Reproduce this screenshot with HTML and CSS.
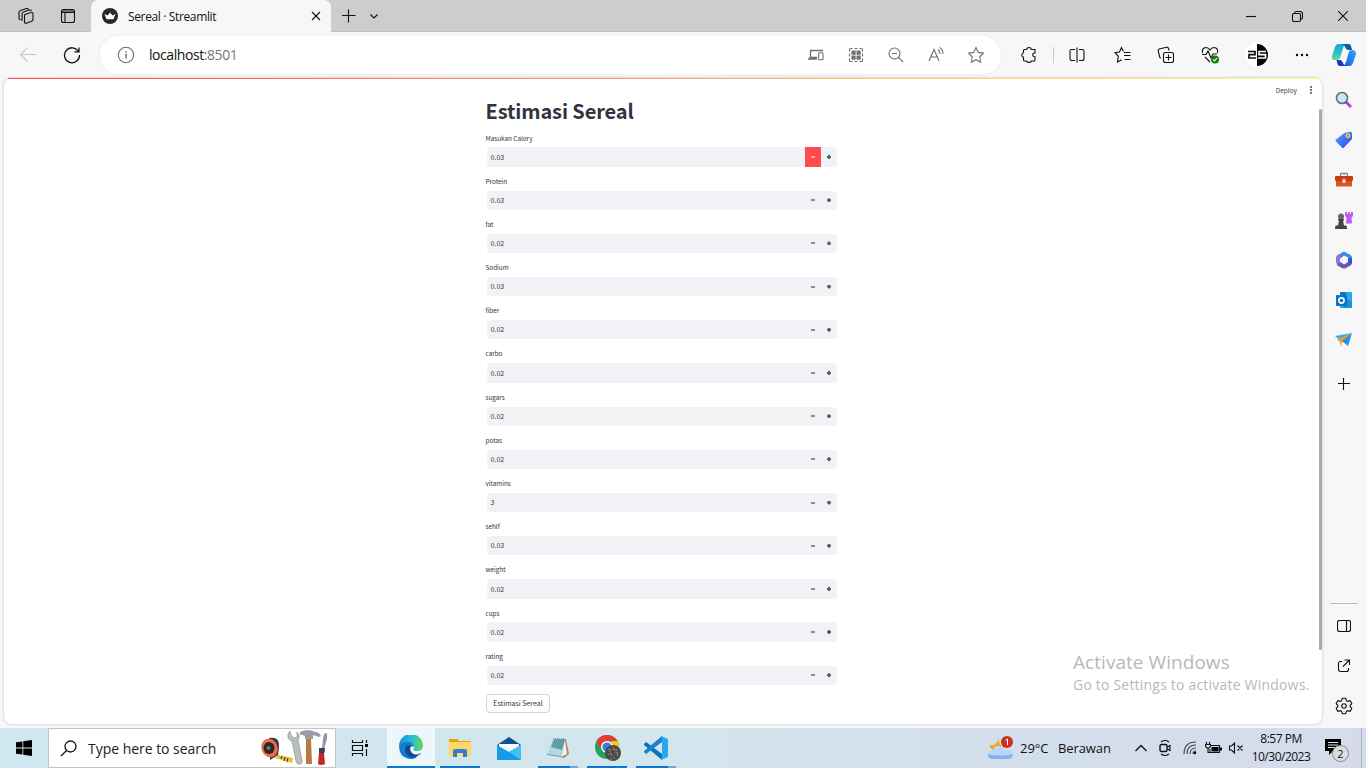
FILE: index.html
```html
<!DOCTYPE html>
<html lang="en">
<head>
<meta charset="utf-8">
<title>Sereal · Streamlit</title>
<link rel="stylesheet" href="styles.css">
</head>
<body>
<div class="screen">
  <header class="tabstrip">
    <div class="strip-icons">
      <svg class="ic" width="18" height="18" viewBox="0 0 18 18"><path d="M8 7.500 14 5.500Q16 5.300 16 7v5.500q0 1-1 1.500L9.500 16.300Q7.500 16.500 7.500 15V8.500q0-.7.5-1zM5 14V7q0-1.500 1.500-2l6-2q1.500-.3 2 1M2 12V5.500Q2 4 3.500 3.500l6-2q1.500-.3 2 1M2 12l1.500 1"/></svg>
      <svg class="ic" width="16" height="16" viewBox="0 0 16 16"><rect x="1.500" y="1.500" width="13" height="13" rx="2"/><path d="M2 3h12M2 4.500h12M5 5v9" /></svg>
    </div>
    <div class="tab">
      <svg width="16" height="16" viewBox="0 0 16 16"><circle cx="8" cy="8" r="8" fill="#262730"/><path d="M2.500 6l3 1.500L8 4.500l2.500 3 3-1.500-2 5.200h-7z" fill="#fff"/></svg>
      <span class="tab-title">Sereal · Streamlit</span>
      <svg class="ic" width="10" height="10" viewBox="0 0 10 10"><path d="M1 1l8 8M9 1 1 9"/></svg>
    </div>
    <svg class="ic new-tab" width="14" height="14" viewBox="0 0 14 14"><path d="M6.500.5v13M0 6.500h13.500"/></svg>
    <svg class="ic tab-menu" width="10" height="8" viewBox="0 0 10 8"><path d="M1.500 2.500 5 6l3.500-3.500"/></svg>
    <div class="window-controls">
      <span><svg class="ic" width="10" height="10" viewBox="0 0 10 10"><path d="M0 5.500h10"/></svg></span>
      <span><svg class="ic" width="11" height="11" viewBox="0 0 11 11"><rect x=".5" y="2.500" width="8" height="8" rx="1.500"/><path d="M2.500 2.200Q3 .5 4.500.5h3.500Q10.500.5 10.500 3v3.500q0 1.500-1.800 2"/></svg></span>
      <span><svg class="ic" width="10" height="10" viewBox="0 0 10 10"><path d="M0 0l10 10M10 0 0 10"/></svg></span>
    </div>
  </header>

  <nav class="toolbar">
    <span class="tool pale"><svg class="ic" width="18" height="18" viewBox="0 0 18 18"><path d="M17 8.500H1.500M8.500 1.500l-7 7 7 7"/></svg></span>
    <span class="tool"><svg class="ic refresh" width="18" height="18" viewBox="0 0 18 18"><path d="M15.500 5.500A7.500 7.500 0 1 0 16.500 9M16 1.500v4.300h-4.500"/></svg></span>
    <div class="address">
      <svg class="ic" width="18" height="18" viewBox="0 0 18 18"><circle cx="9" cy="9" r="7.700"/><path d="M9 7.700v5M9 5v1.400" stroke-width="1.400"/></svg>
      <span class="url">localhost<span class="port">:8501</span></span>
      <div class="address-tools">
        <span><svg class="ic" width="16" height="12" viewBox="0 0 16 12"><path d="M2.500 8V1.500H15M0 10h9M1.500 8.500H9" stroke-width="1.300"/><rect x="10.700" y="3.700" width="4.300" height="7" rx="1"/></svg></span>
        <span><svg class="ic" width="16" height="16" viewBox="0 0 16 16"><path d="M1.500 4.500v-2q0-1 1-1h2M6.500 1.500h3M11.500 1.500h2q1 0 1 1v2M14.500 6.500v3M14.500 11.500v2q0 1-1 1h-2M9.500 14.500h-3M4.500 14.500h-2q-1 0-1-1v-2M1.500 9.500v-3"/><path d="M3.500 3.500h4.200v4.200H3.500zM8.500 3.500h4.200v4.200H8.500zM3.500 8.500h4.200v4.200H3.500zM8.500 8.500h4.200v4.200H8.500z" fill="#707070" stroke="none"/></svg></span>
        <span><svg class="ic" width="16" height="16" viewBox="0 0 16 16"><circle cx="6.500" cy="6.500" r="5.500"/><path d="M4 6.500h5M10.500 10.500 15 15"/></svg></span>
        <span><svg class="ic" width="18" height="18" viewBox="0 0 18 18"><path d="M2 15 7 3.500l5 11.500M3.700 11h6.600M11 3.500q2 1.500 2 4.500M12.500 1.500q3.500 2 3.500 6.500"/></svg></span>
        <span><svg class="ic" width="18" height="18" viewBox="0 0 18 18"><path d="M9 1.500l2.300 4.900 5.200.7-3.800 3.700.9 5.400L9 13.700l-4.600 2.500.9-5.400L1.500 7.100l5.200-.7z"/></svg></span>
      </div>
    </div>
    <span class="tool ext"><svg class="ic" width="16" height="18" viewBox="0 0 16 18"><path d="M5.500 3.500Q6 1.500 8 1.500t2.500 2H14V7q-2-.3-2.300 1.800Q12 11 14 10.700V14q0 1-1 1h-2.500Q10 16.500 8 16.500T5.500 15H3.500q-1 0-1-1v-2.700Q.8 11 .8 9t1.700-2.300V4.500q0-1 1-1z"/></svg></span>
    <span class="divider"></span>
    <span class="tool split"><svg class="ic" width="16" height="16" viewBox="0 0 16 16"><path d="M6 2.500H2.500q-1.500 0-1.500 1.500v7.500q0 2 1.500 2H6M10 2.500h3q2 0 2 1.500v7.500q0 2-2 2h-3M8 .5v15"/></svg></span>
    <span class="tool fav"><svg class="ic" width="17" height="18" viewBox="0 0 17 18"><path d="M9.500 5.500 7.500 1.500 5.500 6 1 6.700l3.300 3.500L3.500 16l4.300-2.300M10 6.500h6.500M10 9.500h6.500M10.500 13.500h6"/></svg></span>
    <span class="tool"><svg class="ic" width="18" height="18" viewBox="0 0 18 18"><rect x="6.500" y="6.500" width="10" height="10" rx="2"/><path d="M11.500 8.500v6M8.500 11.500h6M4 12Q3 12 2.700 11L1.200 5Q1 3.500 2.200 3L9.500 1.200Q11 1 11.500 2.500l.5 2"/></svg></span>
    <span class="tool"><svg class="ic" width="18" height="18" viewBox="0 0 18 18"><path d="M1.500 7Q.5 2 5 1.500q2.500 0 4 2.500 1.500-2.500 4-2.500Q17.500 2 16.500 7M4 11l5 5M1 8.500h4L7 5l3 7 2-4h4"/><circle cx="14" cy="13.500" r="4" fill="#107c10" stroke="none"/><path d="M12 13.500l1.300 1.400 2.600-2.800" stroke="#fff"/></svg></span>
    <span class="tool avatar"><svg width="24" height="24" viewBox="0 0 24 24"><circle cx="12" cy="12" r="12" fill="#fff"/><path d="M12 1a11 11 0 0 1 0 22z" fill="#050505"/><path d="M3 8.500h7v3.200H4v3.300h7" fill="none" stroke="#111" stroke-width="1.700"/><path d="M21 8.500h-7v3.200h6.500v3.300H13" fill="none" stroke="#fff" stroke-width="1.700"/></svg></span>
    <span class="tool dots"><svg width="14" height="4" viewBox="0 0 14 4"><circle cx="2" cy="2" r="1.200"/><circle cx="7" cy="2" r="1.200"/><circle cx="12" cy="2" r="1.200"/></svg></span>
    <span class="tool"><svg width="26" height="24" viewBox="0 0 26 24"><defs><linearGradient id="cp1" x1="0" y1="0" x2="0" y2="1"><stop offset="0" stop-color="#16a6df"/><stop offset=".5" stop-color="#23bccc"/><stop offset="1" stop-color="#72d994"/></linearGradient><linearGradient id="cp2" x1="1" y1="0" x2="0" y2="1"><stop offset="0" stop-color="#34a7f4"/><stop offset="1" stop-color="#145fe4"/></linearGradient></defs><path d="M8 1h7q-2 1-3 4L9.500 14q-1 3-4 3H4q-4 0-3-4L4 4Q5 1 8 1z" fill="url(#cp1)"/><path d="M11 1h6.500q2 0 2.500 2l1 4h-4q-2 0-3-3-.500-2-3-3z" fill="#125b94"/><path d="M21 7q4 0 4 4l-3 9q-1 3-4 3h-6q2-1 3-4l2.500-9q.5-3 3.500-3z" fill="url(#cp2)"/><path d="M5.500 17H9q2 0 3 3 .5 2 3 3H9q-2 0-2.500-2z" fill="#1835ce"/></svg></span>
  </nav>

  <div class="workspace">
    <main class="page">
      <div class="decoration"></div>
      <div class="app-actions"><span>Deploy</span><svg width="3" height="8" viewBox="0 0 3 8"><path d="M1 0h2v2H1zM1 3h2v2H1zM1 6h2v2H1z" fill="#777"/></svg></div>
      <div class="page-scroll"></div>
      <div class="form">
        <h1>Estimasi Sereal</h1>
        <div class="field"><label>Masukan Calory</label><div class="number">0.03<i class="minus hot"></i><i class="plus"></i></div></div>
        <div class="field"><label>Protein</label><div class="number">0.03<i class="minus"></i><i class="plus"></i></div></div>
        <div class="field"><label>fat</label><div class="number">0.02<i class="minus"></i><i class="plus"></i></div></div>
        <div class="field"><label>Sodium</label><div class="number">0.03<i class="minus"></i><i class="plus"></i></div></div>
        <div class="field"><label>fiber</label><div class="number">0.02<i class="minus"></i><i class="plus"></i></div></div>
        <div class="field"><label>carbo</label><div class="number">0.02<i class="minus"></i><i class="plus"></i></div></div>
        <div class="field"><label>sugars</label><div class="number">0.02<i class="minus"></i><i class="plus"></i></div></div>
        <div class="field"><label>potas</label><div class="number">0.02<i class="minus"></i><i class="plus"></i></div></div>
        <div class="field"><label>vitamins</label><div class="number">3<i class="minus"></i><i class="plus"></i></div></div>
        <div class="field"><label>sehlf</label><div class="number">0.03<i class="minus"></i><i class="plus"></i></div></div>
        <div class="field"><label>weight</label><div class="number">0.02<i class="minus"></i><i class="plus"></i></div></div>
        <div class="field"><label>cups</label><div class="number">0.02<i class="minus"></i><i class="plus"></i></div></div>
        <div class="field"><label>rating</label><div class="number">0.02<i class="minus"></i><i class="plus"></i></div></div>
        <button class="submit">Estimasi Sereal</button>
      </div>
    </main>
    <aside class="sidebar">
      <span><svg width="18" height="18" viewBox="0 0 18 18"><path d="M10.500 10.500 16 16" stroke="#b43ff0" stroke-width="3"/><path d="M10 10l2 2" stroke="#555" stroke-width="2"/><circle cx="7" cy="7" r="5.500" fill="#c2e9fb" stroke="#666b70" stroke-width="1.600"/></svg></span>
      <span><svg width="18" height="18" viewBox="0 0 18 18"><defs><linearGradient id="tag" x2="1" y2="1"><stop stop-color="#58a0ff"/><stop offset="1" stop-color="#2947ed"/></linearGradient></defs><path d="M9.500 2 15 .8q2-.3 2 1.700V8L9 16.500q-1 1-2 0l-6-6q-1-1 0-2z" fill="url(#tag)"/><circle cx="13" cy="4.700" r="1.800" fill="#7186b1" stroke="#ffd53e" stroke-width="1.300"/></svg></span>
      <span><svg width="18" height="16" viewBox="0 0 18 16"><path d="M5.500 4V2.500q0-1 1-1h5q1 0 1 1V4" fill="none" stroke="#838b91" stroke-width="1.300"/><path d="M1 8h16v5.500q0 1-1 1H2q-1 0-1-1z" fill="#dc5520"/><rect y="4" width="18" height="5" rx="1" fill="#c53d10"/><rect x="7.500" y="7" width="3" height="4" rx=".8" fill="#ddd"/></svg></span>
      <span><svg width="18" height="19" viewBox="0 0 18 19"><path d="M10 1h2v2h1V1h2v2h1V1h2v4l-1.500 1.500.5 6h-6l.5-6L10 5z" fill="#bd5ded"/><circle cx="6" cy="5.500" r="3" fill="#666"/><path d="M3 8h6v1.500H8l1 5h2q1 0 1 3.500H0q0-3.500 1-3.500h2l1-5H3z" fill="#444"/></svg></span>
      <span><svg width="18" height="18" viewBox="0 0 18 18"><path d="M7 1.500 9 .8Q8 3 8 5.500L5 7.500v7L2 13Q1 12.500 1 11V6.500Q1 5 2.500 4z" fill="#9a72d8"/><path d="M8 1.200Q9 .5 10.500 1.300L15.500 4Q17 5 17 6.500V9l-4-2.500L9 4.500 6 7Q5 3 8 1.200z" fill="#3b8bdf"/><path d="M17 7.500V12q0 1.200-1.200 2L13 15.500V7z" fill="#3158bf"/><path d="m13 11 3.500 2-1 1.200-5 3q-1.500.8-3 0L1.500 14l4-3L9 13.500z" fill="#6c55c3"/><path d="m9 5.500 3.200 1.700v3.600L9 12.500l-3.200-1.700V7.200z" fill="#f7f7f7"/></svg></span>
      <span><svg width="18" height="18" viewBox="0 0 18 18"><path d="M5 1h11q1 0 1 1v14q0 1-1 1H5z" fill="#28a8ea"/><path d="M5 1h6v4H5z" fill="#0d75c5"/><path d="M11 8l6 3v5q0 1-1 1H8z" fill="#1a8fdb"/><rect x="1" y="4" width="11" height="11" rx="1" fill="#0873c7"/><circle cx="6.500" cy="9.500" r="2.600" fill="none" stroke="#fff" stroke-width="1.600"/></svg></span>
      <span><svg width="18" height="16" viewBox="0 0 18 16"><path d="M0 4 17 1 6 9z" fill="#3ba9ee"/><path d="M2 7.500 17 1 7 10l-1 5-1-5z" fill="#f39c24"/><path d="M7 9 17 1l-4 13z" fill="#268fe8"/></svg></span>
      <span class="add"><svg class="ic" width="12" height="12" viewBox="0 0 12 12"><path d="M5.500 0v12M0 5.500h12"/></svg></span>
      <div class="side-bottom">
        <span><svg class="ic" width="14" height="12" viewBox="0 0 14 12"><rect x=".5" y=".5" width="13" height="11" rx="2"/><path d="M9.500.5v11"/></svg></span>
        <span><svg class="ic" width="14" height="14" viewBox="0 0 14 14"><path d="M5 2.500H3.500q-2 0-2 2V10q0 2.500 2 2.500h6q2 0 2-2V9M7.500 1h5v5M12.500 1 6 7.500"/></svg></span>
        <span><svg class="ic" width="18" height="18" viewBox="0 0 18 18"><path d="M7.300 1.200h3.400l.6 2.400 1.500.8 2.400-.7 1.600 2.900-1.600 1.700v1.400l1.600 1.700-1.600 2.900-2.400-.7-1.500.8-.6 2.400H7.300l-.6-2.400-1.500-.8-2.400.7-1.600-2.900 1.600-1.700V8.300L1.200 6.600l1.600-2.900 2.400.7 1.500-.8z"/><circle cx="9" cy="9" r="2.200"/></svg></span>
      </div>
    </aside>
  </div>

  <footer class="taskbar">
    <span class="start"><svg width="16" height="16" viewBox="0 0 16 16"><path d="M0 2.300 6.500 1.400v6.200H0zM7.300 1.300 16 0v7.600H7.300zM0 8.400h6.500v6.200L0 13.700zM7.300 8.400H16V16l-8.700-1.300z"/></svg></span>
    <div class="search">
      <svg class="ic" width="17" height="17" viewBox="0 0 17 17"><circle cx="10.500" cy="6.500" r="5.500" stroke-width="1.300"/><path d="M6.500 10.500 1 16" stroke-width="1.300"/></svg>
      <span>Type here to search</span>
      <svg class="tools" width="68" height="36" viewBox="0 0 68 36"><path d="M18 25l15 3-1 5-17-5z" fill="#e8c52b"/><path d="M22 26l-1 3m4-2-1 4m4-3-1 4" stroke="#333"/><path d="M9 8q11-2 10 9l-1 8-8 5z" fill="#3a3a3a"/><ellipse cx="9.500" cy="18" rx="8" ry="9.500" transform="rotate(-20 9.500 18)" fill="#ed6a4a"/><ellipse cx="9" cy="18" rx="5.500" ry="6" fill="#282828"/><circle cx="8.500" cy="18" r="2" fill="#77757b"/><path d="M30 1l-2 3q-1 6 4 7l4 20q1 4 4 3t2-4l-4-20q3-4-1-8v5l-3 1-3-3z" fill="#b8bfbf" stroke="#8d9693" stroke-width=".7"/><path d="M46 9h5l1 25h-6z" fill="#b77a43"/><path d="M40 2q8-4 15 0 4 0 6 4l-2 1-6-2v4h-8V6q-4-2-5-1z" fill="#999ca8"/><path d="M64 4l3-1v6l-3 10h-2l1-10z" fill="#8f989c"/><path d="M59 18h6l-1 5 1 11q-4 2-7 0l1-11z" fill="#bd2925"/><path d="M59 18h6l-.7 5H59z" fill="#354156"/></svg>
    </div>
    <span class="app taskview"><svg class="ic" width="17" height="16" viewBox="0 0 17 16"><path d="M1.500 0v2.500h10V0M1.500 16v-2.500h10V16M1.500 5.500h10v5h-10zM15.500 0v3M15.500 9v7" stroke-width="1.200"/><path d="M14 4h3v3h-3z" fill="#000" stroke="none"/></svg></span>
    <span class="app edge"><svg width="24" height="24" viewBox="0 0 24 24"><defs><linearGradient id="ed1" x2="1"><stop stop-color="#178cdc"/><stop offset=".5" stop-color="#23bdd5"/><stop offset="1" stop-color="#67d957"/></linearGradient></defs><path d="M0 11A12 12 0 0 1 24 11q0 5-6 5-5 0-3-3 1-3-2-4Q7 5 0 11z" fill="url(#ed1)"/><path d="M0 11Q4 6 10 7q5 1 5 5-3-2-5 1-2 5 3 8 3 2 6 0-4 4-9 3Q0 22 0 11z" fill="#157dce"/><path d="M8 10q-4 5 0 10 5 5 12 0 2-1 2-2-5 3-9 0-3-3-1-7z" fill="#114b8e"/></svg></span>
    <span class="app running"><svg width="22" height="20" viewBox="0 0 22 20"><path d="M0 1h8l2 2h11q1 0 1 1v4H0z" fill="#dfa313"/><path d="M0 4h22v13q0 1-1 1H1q-1 0-1-1z" fill="#ffd766"/><path d="M4 19v-6q0-2 2-2h10q2 0 2 2v6h-4v-4H8v4z" fill="#2e80cf"/></svg></span>
    <span class="app"><svg width="24" height="23" viewBox="0 0 24 23"><path d="M0 8 12 0l12 8-12 9z" fill="#124f91"/><path d="M2 7h20v8H2z" fill="#f7fbff"/><path d="M0 8l12 7 12-7v15H0z" fill="#149ce5"/><path d="M12 15 24 8v15z" fill="#42c0f4"/></svg></span>
    <span class="app running more"><svg width="24" height="22" viewBox="0 0 24 22"><path d="M18 2h2l3 15-5 4-4-1z" fill="#a58d67"/><path d="M19 3l2 14-6 3z" fill="#eef2f2"/><path d="M7 2h12l-4 17L1 17z" fill="#a9dbe2"/><path d="M8 2h11l-3 11-11-3z" fill="#5f9fac"/><path d="M1 17l14 2v1L1 18z" fill="#7d979b"/><path d="M7 1.500h12" stroke="#8d999c" stroke-dasharray="1 1"/></svg></span>
    <span class="app running chrome"><svg width="26" height="26" viewBox="0 0 26 26"><circle cx="12" cy="12" r="12" fill="#28a154"/><path d="M1.600 6A12 12 0 0 1 22.400 6H12l-5 9z" fill="#e63b2e"/><path d="M22.400 6A12 12 0 0 1 12 24l6-9-2-9z" fill="#fbc116"/><circle cx="12" cy="12" r="6" fill="#fff"/><circle cx="12" cy="12" r="4.600" fill="#397de4"/><circle cx="18" cy="18" r="8" fill="#4c4b4a"/><path d="M13 14l3 1-2 2m4-5 1 3 3-1m-9 6 3-2 1 3m3-4 3 1-1 3m-4 1 2 2m-5 0 2 1m4-11 1 2" fill="none" stroke="#8b8885"/></svg></span>
    <span class="app running more"><svg width="24" height="24" viewBox="0 0 24 24"><path d="M0 8l2-2 16 12v6L0 9z" fill="#0873b9"/><path d="M0 16l2 2L18 6V0L0 15z" fill="#1684cd"/><path d="M17 0l6 2.500q1 .5 1 1.500v16q0 1-1 1.500L17 24l1-3V3z" fill="#29a8ee"/></svg></span>
    <div class="tray">
      <svg class="weather" width="26" height="26" viewBox="0 0 26 26"><path d="M11 2q-2 7 6 11l-8 3Q2 15 1 10q8 2 10-8z" fill="#f5a523"/><path d="M4 24q-6-3-3-7 1-2 4-2 2-5 7-4 4 0 5 4 7-1 8 4 0 3-3 5z" fill="#b9d5f7"/><path d="M4 24q-5-1-4-5 3 2 7 1 8 2 18-1 0 4-4 5z" fill="#86b2ea"/><circle cx="19" cy="7" r="6" fill="#c92e20"/><path d="M17.500 5.500 19.500 4v6" fill="none" stroke="#fff"/></svg>
      <span class="weather-text">29°C</span><span class="berawan">Berawan</span>
      <svg class="ic chevron" width="12" height="8" viewBox="0 0 12 8"><path d="M.5 7 6 1.500 11.500 7" stroke-width="1.300"/></svg>
      <svg class="ic meet" width="12" height="16" viewBox="0 0 12 16"><path d="M2 2q4-3 8 0M2 14q4 3 8 0" /><rect x="1" y="4.500" width="7" height="7" rx="1.500" stroke-width="1.400"/><path d="M8.500 7 11 5.500v5L8.500 9"/></svg>
      <svg class="ic wifi" width="14" height="14" viewBox="0 0 14 14"><path d="M1 13Q1 1 13 1M4 13q0-9 9-9M7 13q0-6 6-6M10 13q0-3 3-3" stroke="#444"/><circle cx="12" cy="12" r="1.200" fill="#000" stroke="none"/></svg>
      <svg class="ic battery" width="17" height="13" viewBox="0 0 17 13"><path d="M1.500 0v2M4.500 0v2M.5 2.500h5v2l-1.500 1.500h-2L.5 4.500zM3 6v4.500h2M6 3.500h8.500v7H5V7"/><path d="M6.500 5h7v4.500h-7zM15 5.500h2v3h-2z" fill="#000" stroke="none"/></svg>
      <svg class="ic volume" width="16" height="12" viewBox="0 0 16 12"><path d="M1.500 4h2l3-3v10l-3-3h-2zM9.500 3.500l5 5M14.500 3.500l-5 5"/></svg>
      <div class="clock"><span>8:57 PM</span><span class="date">10/30/2023</span></div>
      <div class="notices"><svg width="17" height="16" viewBox="0 0 17 16"><path d="M0 0h16v12H8l-4 4v-4H0z"/><path d="M3 3.500h10M3 6h10M3 8.500h7" stroke="#d4dfeb"/></svg><b>2</b></div>
    </div>
  </footer>
  <div class="watermark"><p>Activate Windows</p><p class="sub">Go to Settings to activate Windows.</p></div>
</div>
</body>
</html>
```
FILE: styles.css
```css
* { box-sizing: border-box; }
body { margin: 0; font-family: "Open Sans", "Noto Sans", sans-serif; color: #111; overflow: hidden; }
svg { display: block; flex: none; }
.ic { fill: none; stroke: currentColor; stroke-width: 1.1; }
.screen { position: relative; width: 1366px; height: 768px; background: #f7f7f7; display: flex; flex-direction: column; overflow: hidden; }

.tabstrip { height: 32px; flex: none; display: flex; align-items: center; background: #cdcdcd; box-shadow: inset 0 -1px #c0c0c0; }
.strip-icons { width: 91px; padding-left: 17px; display: flex; align-items: center; gap: 25px; }
.tab { width: 240px; height: 32px; padding: 0 10px 0 11px; display: flex; align-items: center; background: #f7f7f7; border-radius: 7px 7px 0 0; }
.tab-title { flex: 1; margin-left: 10px; font-size: 12px; letter-spacing: -.36px; white-space: nowrap; }
.new-tab { margin-left: 11px; }
.tab-menu { margin-left: 13px; }
.window-controls { margin-left: auto; display: flex; }
.window-controls span { width: 46px; height: 32px; display: grid; place-items: center; }

.toolbar { height: 46px; flex: none; display: flex; align-items: center; padding-left: 6px; }
.tool { width: 44px; height: 46px; flex: none; display: grid; place-items: center; }
.tool.pale { color: #c8c8c8; }
.refresh { stroke-width: 1.3; }
.address { width: 901px; height: 38px; flex: none; margin: 0 6px; padding-left: 17px; border-radius: 19px; background: #fff; display: flex; align-items: center; color: #707070; box-shadow: 0 0 4px #ececec; }
.url { margin-left: 14px; padding-bottom: 1px; font-size: 14px; letter-spacing: -.43px; color: #111; }
.port { color: #777; }
.address-tools { margin-left: auto; padding-right: 5px; display: flex; }
.address-tools span { width: 40px; display: grid; place-items: center; }
.divider { width: 1px; height: 16px; flex: none; margin: 0 1px 0 2px; background: #c9c9c9; }
.fav { margin-left: 1px; }
.avatar { margin-left: 3px; }
.tool.dots { width: 43px; padding-left: 3px; }

.workspace { height: 650px; flex: none; display: flex; }
.page { position: relative; width: 1318px; flex: none; margin-left: 4px; height: 646px; background: #fff; border-radius: 8px; box-shadow: 0 0 3px #bbb; }
.decoration { height: 1px; margin: 0 4px; background: linear-gradient(90deg, #ff4b4b, #fffd80); }
.app-actions { position: absolute; right: 10px; top: 6.500px; height: 10px; display: flex; align-items: center; gap: 12px; font: 6.500px/10px "Noto Sans CJK SC", sans-serif; color: #444; }
.page-scroll { position: absolute; right: 0; top: 31px; width: 3px; height: 541px; border-radius: 2px; background: #a9a9ae; }
.form { width: 351px; margin-left: 482px; padding-top: 17.500px; font-family: "Noto Sans CJK SC", sans-serif; color: #31333f; }
h1 { height: 36px; margin: 0 0 0 -.5px; font-size: 20px; line-height: 28px; letter-spacing: -.12px; font-weight: 700; white-space: nowrap; }
.field { height: 43.200px; }
.field label { display: block; height: 14.900px; margin-left: -.5px; font-size: 6.350px; line-height: 11.500px; }
.number { height: 19.300px; margin-left: 1px; padding-left: 3.600px; background: #f0f2f6; border-radius: 4px; display: flex; align-items: center; font-size: 7px; line-height: 10.600px; overflow: hidden; }
.minus, .plus { width: 16px; height: 100%; flex: none; display: grid; place-items: center; }
.minus { margin-left: auto; }
.minus::before { content: ""; width: 4px; height: 2px; background: #8a8b93; }
.plus::before { content: ""; width: 4px; height: 4px; background: #5d5f68; clip-path: polygon(25% 0, 75% 0, 75% 25%, 100% 25%, 100% 75%, 75% 75%, 75% 100%, 25% 100%, 25% 75%, 0 75%, 0 25%, 25% 25%); }
.hot { background: #ff4b4b; }
.hot::before { background: #ffa5a5; }
.submit { display: block; width: 64px; height: 19px; margin: -.4px 0 0; padding: 0; border: 1px solid #d3d3d6; border-radius: 4px; background: #fff; font: 7px/17px "Noto Sans CJK SC", sans-serif; color: #31333f; }

.sidebar { width: 44px; padding: 2px 0; display: flex; flex-direction: column; }
.sidebar span { height: 40px; display: grid; place-items: center; }
.sidebar .add { margin-top: 4px; }
.side-bottom { margin: auto 8px 0; padding-top: 2px; border-top: 1px solid #bbb; }

.taskbar { height: 40px; flex: none; display: flex; align-items: center; background: linear-gradient(90deg, #cfe7ef, #d3e5ed 50%, #d3deec 78%, #d5dbeb); }
.start { width: 48px; display: grid; place-items: center; }
.search { width: 288px; height: 40px; padding: 0 7px 0 11px; border: 1px solid #c4c4c4; background: #fff; display: flex; align-items: center; }
.search span { margin-left: 11px; font-size: 14px; letter-spacing: -.03px; white-space: nowrap; color: #222; }
.tools { margin-left: auto; }
.app { width: 49px; height: 40px; flex: none; display: grid; place-items: center; }
.taskview { width: 51px; padding-right: 4px; }
.edge { width: 48px; background: #edf6fa; border-bottom: 2px solid #0877d6; }
.running { background: linear-gradient(#0877d6, #0877d6) 5px 38px / 40px 2px no-repeat; }
.chrome { padding-left: 2px; }
.more { background: linear-gradient(90deg, #0877d6 32px, #6ba9e3 32px) 5px 38px / 40px 2px no-repeat; }
.tray { margin-left: auto; height: 40px; display: flex; align-items: center; font-size: 13px; white-space: nowrap; border-right: 1px solid #aab4c4; margin-right: 4px; }
.weather-text { width: 38px; margin-left: 6px; letter-spacing: -.05px; }
.berawan { width: 53px; letter-spacing: -.1px; }
.chevron { margin-left: 24px; }
.meet { margin-left: 12px; }
.wifi { margin-left: 12px; }
.battery { margin-left: 8px; }
.volume { margin-left: 6px; }
.clock { width: 62px; margin-left: 6px; display: flex; flex-direction: column; align-items: center; font-size: 12px; line-height: 18px; letter-spacing: -.5px; }
.notices { position: relative; width: 36px; height: 18px; margin: 0 0 0 13px; }
.notices b { position: absolute; left: 7px; top: 6px; width: 17px; height: 17px; border: 1px solid #888; border-radius: 50%; background: #d9dde2; font-size: 11px; line-height: 15px; text-align: center; font-weight: 400; }

.watermark { position: absolute; left: 1073px; top: 650px; color: #b8b8b8; white-space: nowrap; }
.watermark p { margin: 0; font-size: 19px; line-height: 25px; letter-spacing: .05px; }
.watermark .sub { font-size: 14px; line-height: 20px; letter-spacing: .2px; }
```
